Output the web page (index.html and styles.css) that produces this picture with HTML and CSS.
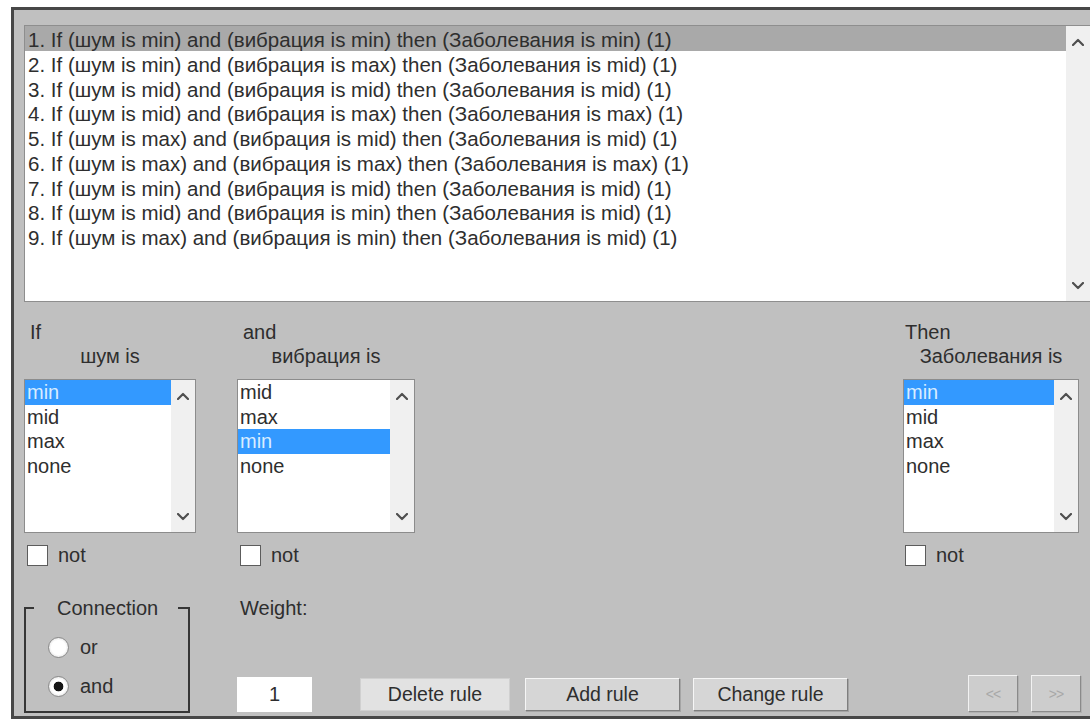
FILE: index.html
```html
<!DOCTYPE html>
<html lang="ru">
<head>
<meta charset="utf-8">
<title>Rule Editor</title>
<link rel="stylesheet" href="styles.css">
</head>
<body>
<div class="window">
  <div class="rules">
    <ul class="rule-list">
      <li class="current">1. If (шум is min) and (вибрация is min) then (Заболевания is min) (1)</li>
      <li>2. If (шум is min) and (вибрация is max) then (Заболевания is mid) (1)</li>
      <li>3. If (шум is mid) and (вибрация is mid) then (Заболевания is mid) (1)</li>
      <li>4. If (шум is mid) and (вибрация is max) then (Заболевания is max) (1)</li>
      <li>5. If (шум is max) and (вибрация is mid) then (Заболевания is mid) (1)</li>
      <li>6. If (шум is max) and (вибрация is max) then (Заболевания is max) (1)</li>
      <li>7. If (шум is min) and (вибрация is mid) then (Заболевания is mid) (1)</li>
      <li>8. If (шум is mid) and (вибрация is min) then (Заболевания is mid) (1)</li>
      <li>9. If (шум is max) and (вибрация is min) then (Заболевания is mid) (1)</li>
    </ul>
    <div class="vscroll">
      <svg class="chev" width="12" height="8" viewBox="0 0 12 8"><polyline points="1,7 6,2 11,7"/></svg>
      <svg class="chev" width="12" height="8" viewBox="0 0 12 8"><polyline points="1,1 6,6 11,1"/></svg>
    </div>
  </div>

  <div class="editors">
    <div class="var var-a">
      <div class="cap">If</div>
      <div class="name">шум is</div>
      <div class="listbox">
        <ul class="opts">
          <li class="sel">min</li>
          <li>mid</li>
          <li>max</li>
          <li>none</li>
        </ul>
        <div class="vscroll">
          <svg class="chev" width="12" height="8" viewBox="0 0 12 8"><polyline points="1,7 6,2 11,7"/></svg>
          <svg class="chev" width="12" height="8" viewBox="0 0 12 8"><polyline points="1,1 6,6 11,1"/></svg>
        </div>
      </div>
      <div class="neg"><span class="box"></span>not</div>
    </div>

    <div class="var var-b">
      <div class="cap">and</div>
      <div class="name">вибрация is</div>
      <div class="listbox">
        <ul class="opts">
          <li>mid</li>
          <li>max</li>
          <li class="sel">min</li>
          <li>none</li>
        </ul>
        <div class="vscroll">
          <svg class="chev" width="12" height="8" viewBox="0 0 12 8"><polyline points="1,7 6,2 11,7"/></svg>
          <svg class="chev" width="12" height="8" viewBox="0 0 12 8"><polyline points="1,1 6,6 11,1"/></svg>
        </div>
      </div>
      <div class="neg"><span class="box"></span>not</div>
    </div>

    <div class="var var-c">
      <div class="cap">Then</div>
      <div class="name">Заболевания is</div>
      <div class="listbox">
        <ul class="opts">
          <li class="sel">min</li>
          <li>mid</li>
          <li>max</li>
          <li>none</li>
        </ul>
        <div class="vscroll">
          <svg class="chev" width="12" height="8" viewBox="0 0 12 8"><polyline points="1,7 6,2 11,7"/></svg>
          <svg class="chev" width="12" height="8" viewBox="0 0 12 8"><polyline points="1,1 6,6 11,1"/></svg>
        </div>
      </div>
      <div class="neg"><span class="box"></span>not</div>
    </div>
  </div>

  <div class="footer">
    <fieldset class="connection">
      <legend>Connection</legend>
      <div class="radio radio-first"><span class="dot"></span>or</div>
      <div class="radio on"><span class="dot"></span>and</div>
    </fieldset>

    <div class="weight">
      <div class="weight-cap">Weight:</div>
      <div class="num">1</div>
    </div>

    <div class="actions">
      <button class="btn btn-delete">Delete rule</button>
      <button class="btn btn-add">Add rule</button>
      <button class="btn btn-change">Change rule</button>
    </div>

    <div class="nav">
      <button class="nbtn">&lt;&lt;</button>
      <button class="nbtn">&gt;&gt;</button>
    </div>
  </div>
</div>
</body>
</html>
```

FILE: styles.css
```css
* {
  box-sizing: border-box;
}

html,
body {
  margin: 0;
  height: 100%;
}

body {
  background: #ffffff;
  font-family: "Liberation Sans", Arial, sans-serif;
  font-size: 20px;
  color: #2e2e2e;
  overflow: hidden;
}

ul {
  list-style: none;
  margin: 0;
  padding: 0;
}

/* main panel with dark frame on top, left and bottom */
.window {
  margin: 7px 0 0 11px;
  height: 712px;
  border: 3px solid #474747;
  border-right: 0;
  background: #c0c0c0;
  padding: 15px 0 3px 10px;
  display: flex;
  flex-direction: column;
}

/* rule list */
.rules {
  height: 277px;
  display: flex;
  background: #ffffff;
  border: 1px solid #8e8e8e;
  border-right: 0;
}

.rule-list {
  flex: 1;
  font-size: 20.5px;
  white-space: nowrap;
  overflow: hidden;
}

.rule-list li {
  height: 24.75px;
  padding: 3px 0 0 3px;
  line-height: 21.75px;
}

.rule-list li.current {
  background: #a9a9a9;
}

.vscroll {
  width: 24px;
  flex: none;
  background: #f0f0f0;
  display: flex;
  flex-direction: column;
  justify-content: space-between;
  align-items: center;
  padding: 12px 0 11px;
}

.chev polyline {
  fill: none;
  stroke: #4f4f4f;
  stroke-width: 2.2;
  stroke-linecap: round;
  stroke-linejoin: round;
}

/* antecedent / consequent pickers */
.editors {
  display: flex;
  margin-top: 18px;
  padding-right: 11px;
}

.var {
  display: flex;
  flex-direction: column;
}

.var-a {
  width: 172px;
}

.var-b {
  width: 178px;
  margin-left: 41px;
}

.var-c {
  width: 176px;
  margin-left: auto;
}

.cap {
  line-height: 24px;
  padding-left: 6px;
}

.var-c .cap {
  padding-left: 2px;
}

.name {
  line-height: 24px;
  text-align: center;
}

.listbox {
  margin-top: 11px;
  height: 154px;
  display: flex;
  background: #ffffff;
  border: 1px solid #8c8c8c;
}

.opts {
  flex: 1;
  line-height: 24.5px;
}

.opts li {
  padding-left: 2px;
}

.opts li.sel {
  background: #3399ff;
  color: #d8ecff;
}

.listbox .vscroll {
  padding: 12px 0 11px;
}

.neg {
  margin-top: 12px;
  height: 21px;
  display: flex;
  align-items: center;
  gap: 10px;
  padding-left: 3px;
}

.var-c .neg {
  padding-left: 2px;
}

.box {
  width: 21px;
  height: 21px;
  background: #ffffff;
  border: 1.5px solid #5c5c5c;
}

/* bottom row */
.footer {
  margin-top: auto;
  height: 117px;
  display: flex;
  align-items: flex-end;
}

.connection {
  width: 166px;
  height: 117px;
  margin: 0;
  padding: 0 0 0 8px;
  min-width: 0;
  border: 2px solid #363636;
}

.connection legend {
  padding: 0 20px 0 23px;
  line-height: 24px;
}

.radio {
  height: 21px;
  display: flex;
  align-items: center;
  gap: 11px;
  margin-left: 14px;
  margin-top: 18px;
}

.radio-first {
  margin-top: 17px;
}

.dot {
  width: 21px;
  height: 21px;
  border-radius: 50%;
  border: 1px solid #8a8a8a;
  background: radial-gradient(circle at 50% 50%, #ffffff 0 7px, #e8e8e8 10px);
}

.radio.on .dot {
  background: radial-gradient(circle at 50% 50%, #151515 0 4.5px, #ffffff 5.2px 7px, #e8e8e8 10px);
}

.weight {
  width: 75px;
  height: 117px;
  margin-left: 47px;
  display: flex;
  flex-direction: column;
  justify-content: space-between;
}

.weight-cap {
  line-height: 24px;
  padding-left: 3px;
}

.num {
  height: 35px;
  margin-bottom: 1px;
  background: #ffffff;
  text-align: center;
  line-height: 35px;
}

.actions {
  display: flex;
  margin-left: 48px;
  margin-bottom: 2px;
}

.btn {
  height: 33px;
  padding: 0;
  font-family: inherit;
  font-size: 19.5px;
  color: #2e2e2e;
  background: #d6d6d6;
  border: 1px solid;
  border-color: #f6f6f6 #7e7e7e #7e7e7e #f6f6f6;
  box-shadow: 1px 1px 0 #a4a4a4;
}

.btn-delete {
  width: 150px;
  background: #e2e2e2;
  border-color: #d0d0d0;
  box-shadow: none;
}

.btn-add {
  width: 155px;
  margin-left: 15px;
}

.btn-change {
  width: 155px;
  margin-left: 13px;
}

.nav {
  margin-left: auto;
  margin-right: 9px;
  margin-bottom: 1px;
  display: flex;
  gap: 13px;
}

.nbtn {
  width: 50px;
  height: 37px;
  padding: 0;
  font-family: inherit;
  font-size: 14px;
  letter-spacing: -1px;
  color: #a8a8a8;
  background: #cdcdcd;
  border: 1px solid;
  border-color: #f2f2f2 #8a8a8a #8a8a8a #f2f2f2;
  box-shadow: 1px 1px 0 #b0b0b0;
}
```
